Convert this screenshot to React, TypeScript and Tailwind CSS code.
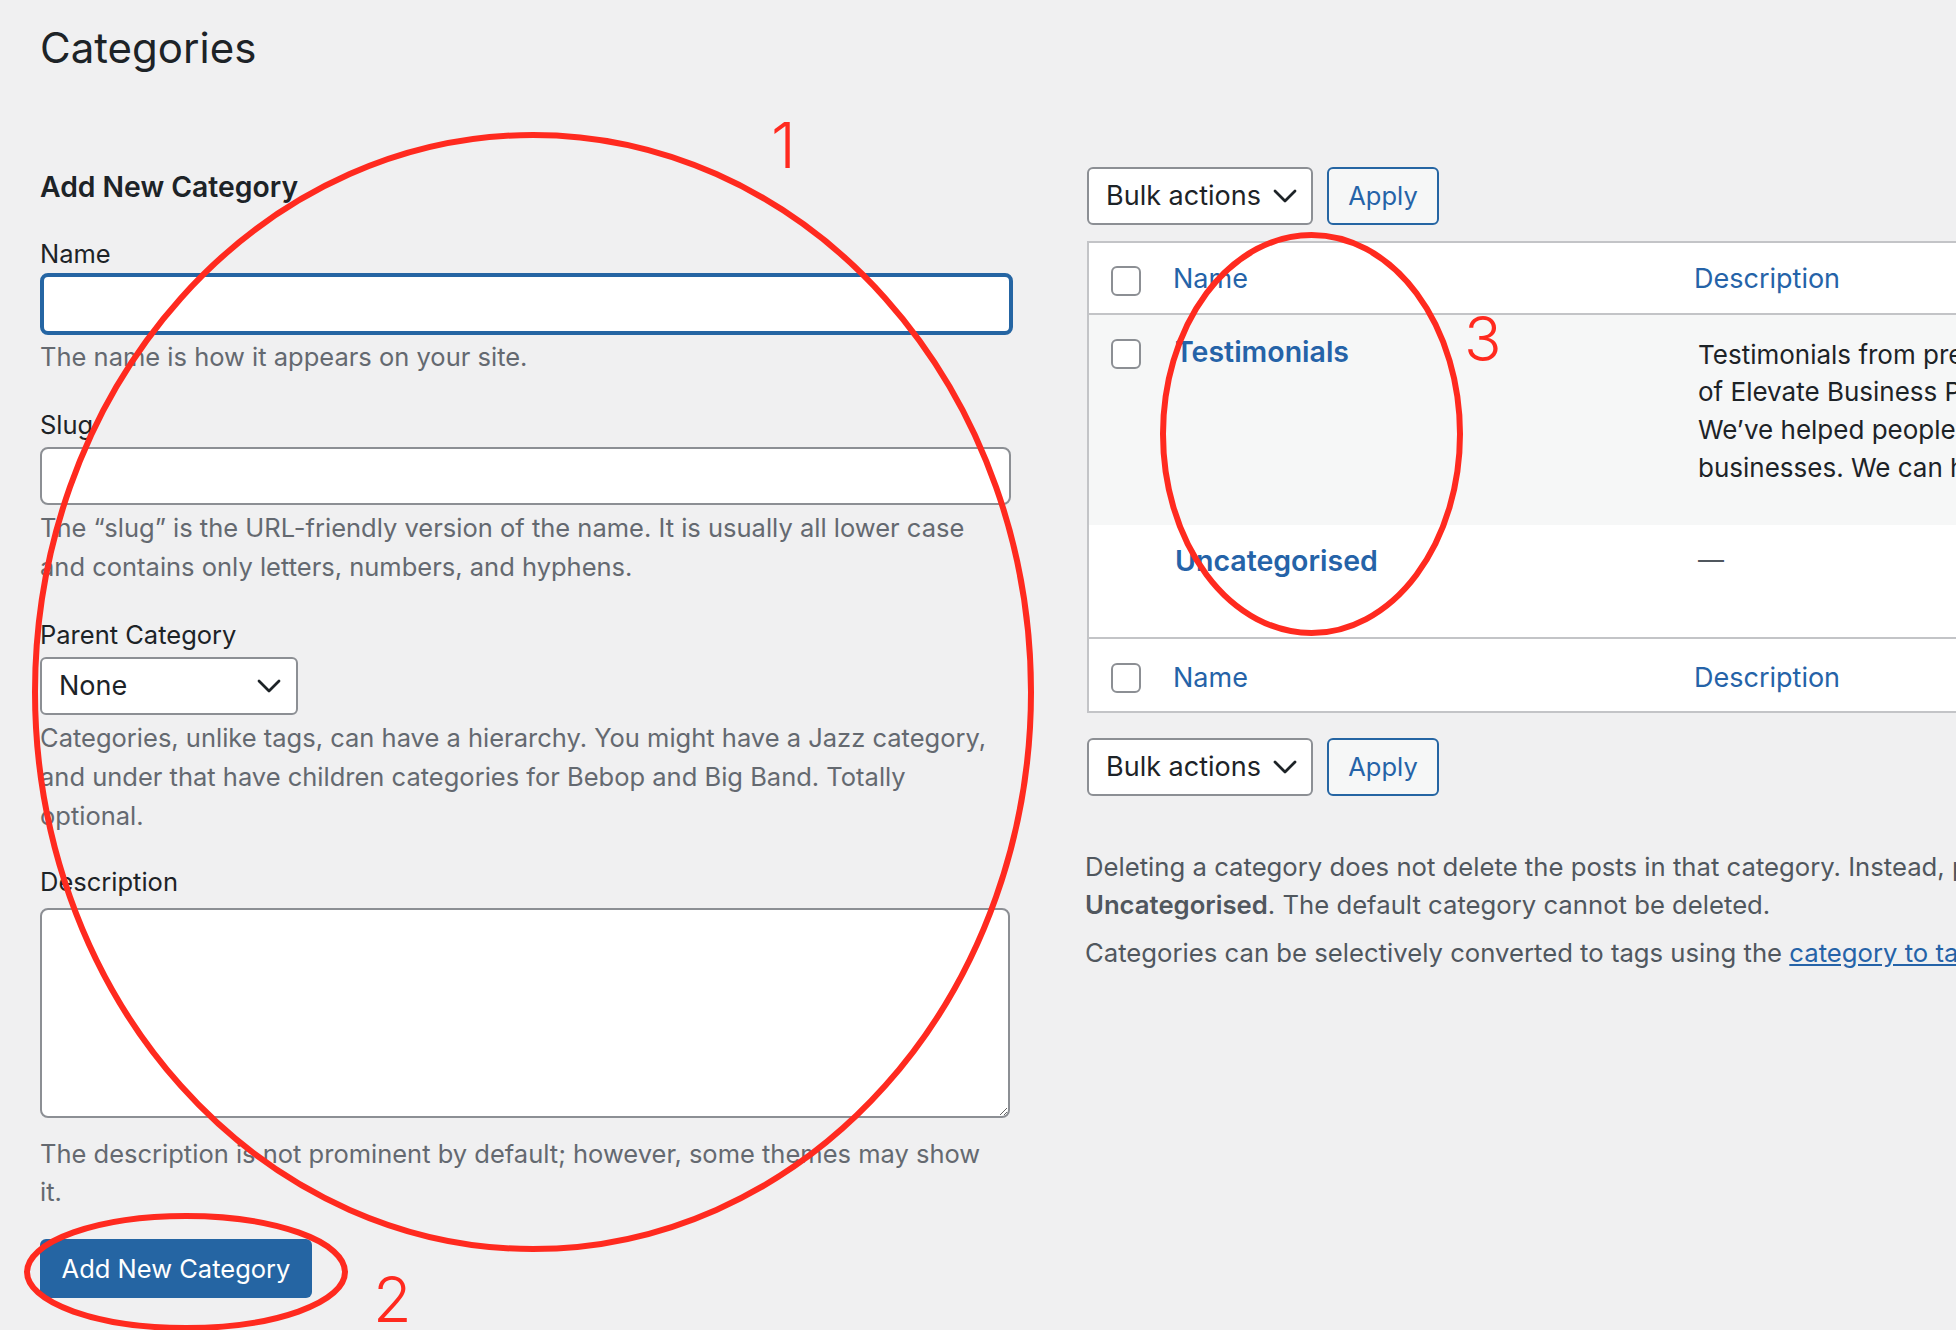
import React from "react";

function Chevron() {
  return (
    <svg width="24" height="14" viewBox="0 0 24 14" fill="none" className="shrink-0">
      <path d="M2 2l10 10L22 2" stroke="#1d2327" strokeWidth="2.8" strokeLinecap="round" strokeLinejoin="round" />
    </svg>
  );
}

function Checkbox() {
  return <span className="block h-[30px] w-[30px] rounded-[6px] border-2 border-[#8c8f94] bg-white" />;
}

function BulkBar() {
  return (
    <div className="flex gap-[14px]">
      <div className="flex h-[58px] w-[226px] items-center justify-between rounded-[6px] border-2 border-[#8c8f94] bg-white pl-[17px] pr-[14px] text-[27px] leading-[36px] text-[#1d2327]">
        <span>Bulk actions</span>
        <Chevron />
      </div>
      <button className="flex h-[58px] w-[112px] items-center justify-center rounded-[6px] border-2 border-[#2565a3] bg-[#f6f7f7] text-[25.5px] leading-[36px] text-[#2563a8]">
        Apply
      </button>
    </div>
  );
}

function Annotations() {
  return (
    <>
      <svg className="pointer-events-none absolute left-0 top-0" width="1956" height="1330" viewBox="0 0 1956 1330">
        <ellipse cx="533" cy="692" rx="498" ry="557" fill="none" stroke="#ff2a1f" strokeWidth="6" />
        <ellipse cx="186" cy="1272" rx="159" ry="56" fill="none" stroke="#ff2a1f" strokeWidth="6" />
        <ellipse cx="1311.5" cy="434" rx="148.5" ry="199" fill="none" stroke="#ff2a1f" strokeWidth="6" />
      </svg>
      <span className="pointer-events-none absolute left-[771px] top-[114px] text-[63px] font-light leading-[63px] text-[#ff2a1f]">1</span>
      <span className="pointer-events-none absolute left-[373px] top-[1268px] text-[63px] font-light leading-[63px] text-[#ff2a1f]">2</span>
      <span className="pointer-events-none absolute left-[1464px] top-[308px] text-[62px] font-light leading-[62px] text-[#ff2a1f]">3</span>
    </>
  );
}

export default function App() {
  return (
    <div className="relative h-[1330px] w-[1956px] overflow-hidden bg-[#f0f0f1] font-['Inter','Noto_Sans',sans-serif]">
      <div className="pl-[40px] pt-[21px]">
        <h1 className="text-[42px] leading-[54px] text-[#1d2327]">Categories</h1>

        <div className="flex">
          {/* add form */}
          <div className="w-[973px] shrink-0 pt-[94px]">
            <h2 className="text-[28.3px] font-semibold leading-[36px] text-[#1d2327]">Add New Category</h2>

            <label className="mt-[30.6px] block text-[25.5px] leading-[36px] text-[#1d2327]">Name</label>
            <input type="text" className="mt-[1.4px] block h-[62px] w-full rounded-[8px] border-4 border-[#2565a3] bg-white px-3 outline-none" />
            <p className="mt-[3px] text-[25.5px] leading-[38.7px] text-[#646970]">The name is how it appears on your site.</p>

            <label className="mt-[30px] block text-[25.5px] leading-[36px] text-[#1d2327]">Slug</label>
            <input type="text" className="mt-[4px] block h-[58px] w-[971px] rounded-[8px] border-2 border-[#8c8f94] bg-white px-3 outline-none" />
            <p className="mt-[4.5px] text-[25.5px] leading-[38.7px] text-[#646970]">
              The “slug” is the URL-friendly version of the name. It is usually all lower case
              <br />
              and contains only letters, numbers, and hyphens.
            </p>

            <label className="mt-[30px] block text-[25.5px] leading-[36px] text-[#1d2327]">Parent Category</label>
            <div className="mt-[4px] flex h-[58px] w-[258px] items-center justify-between rounded-[6px] border-2 border-[#8c8f94] bg-white pl-[17px] pr-[15px] text-[27px] leading-[36px] text-[#1d2327]">
              <span>None</span>
              <Chevron />
            </div>
            <p className="mt-[4.5px] text-[25.5px] leading-[38.7px] text-[#646970]">
              Categories, unlike tags, can have a hierarchy. You might have a Jazz category,
              <br />
              and under that have children categories for Bebop and Big Band. Totally
              <br />
              optional.
            </p>

            <label className="mt-[29px] block text-[25.5px] leading-[36px] text-[#1d2327]">Description</label>
            <textarea className="mt-[8px] block h-[210px] w-[970px] rounded-[8px] border-2 border-[#8c8f94] bg-white px-3 outline-none" />
            <p className="mt-[16.5px] text-[25.5px] leading-[38.7px] text-[#646970]">
              The description is not prominent by default; however, some themes may show
              <br />
              it.
            </p>

            <button className="mt-[27px] flex h-[59px] w-[272px] items-center justify-center rounded-[6px] bg-[#2565a3] text-[25.5px] leading-[36px] text-white">
              Add New Category
            </button>
          </div>

          {/* list */}
          <div className="ml-[74px] w-[1400px] shrink-0 pt-[92px]">
            <BulkBar />

            <div className="mt-[16px] w-full border-2 border-[#c3c4c7] bg-white">
              <div className="flex h-[72px] border-b-2 border-[#c3c4c7]">
                <div className="w-[74px] shrink-0 pl-[22px] pt-[23px]">
                  <Checkbox />
                </div>
                <div className="w-[523px] shrink-0 pl-[10px] pt-[17.5px] text-[27px] leading-[36px] text-[#2563a8]">Name</div>
                <div className="flex-1 pl-[8px] pt-[17.5px] text-[27px] leading-[36px] text-[#2563a8]">Description</div>
              </div>

              <div className="flex h-[210px] bg-[#f6f7f7]">
                <div className="w-[74px] shrink-0 pl-[22px] pt-[24px]">
                  <Checkbox />
                </div>
                <div className="w-[523px] shrink-0 pl-[12px] pt-[17.5px] text-[28.5px] font-semibold leading-[38px] text-[#2563a8]">Testimonials</div>
                <div className="flex-1 whitespace-nowrap pl-[12px] pt-[20.6px] text-[26px] leading-[37.7px] text-[#1d2327]">
                  <div>Testimonials from previous clients and customers</div>
                  <div>of Elevate Business Partners and what they say about us.</div>
                  <div>We’ve helped people start and grow their</div>
                  <div>businesses. We can help you do the same.</div>
                </div>
              </div>

              <div className="flex h-[114px] border-b-2 border-[#c3c4c7]">
                <div className="w-[74px] shrink-0" />
                <div className="w-[523px] shrink-0 pl-[12px] pt-[16.5px] text-[28.5px] font-semibold leading-[38px] text-[#2563a8]">Uncategorised</div>
                <div className="flex-1 pl-[12px] pt-[16px] text-[26px] leading-[37.7px] text-[#50575e]">—</div>
              </div>

              <div className="flex h-[72px]">
                <div className="w-[74px] shrink-0 pl-[22px] pt-[24px]">
                  <Checkbox />
                </div>
                <div className="w-[523px] shrink-0 pl-[10px] pt-[20.5px] text-[27px] leading-[36px] text-[#2563a8]">Name</div>
                <div className="flex-1 pl-[8px] pt-[20.5px] text-[27px] leading-[36px] text-[#2563a8]">Description</div>
              </div>
            </div>

            <div className="mt-[25px]">
              <BulkBar />
            </div>

            <p className="-ml-[2px] mt-[52px] whitespace-nowrap text-[25.7px] leading-[37.5px] text-[#50575e]">
              Deleting a category does not delete the posts in that category. Instead, posts that were only assigned to the deleted category are set to the default category
              <br />
              <strong className="font-semibold">Uncategorised</strong>. The default category cannot be deleted.
            </p>
            <p className="-ml-[2px] mt-[11px] whitespace-nowrap text-[25.7px] leading-[37.5px] text-[#50575e]">
              Categories can be selectively converted to tags using the{" "}
              <a href="#" className="text-[#2563a8] underline">category to tag converter</a>.
            </p>
          </div>
        </div>
      </div>

      <Annotations />
    </div>
  );
}
